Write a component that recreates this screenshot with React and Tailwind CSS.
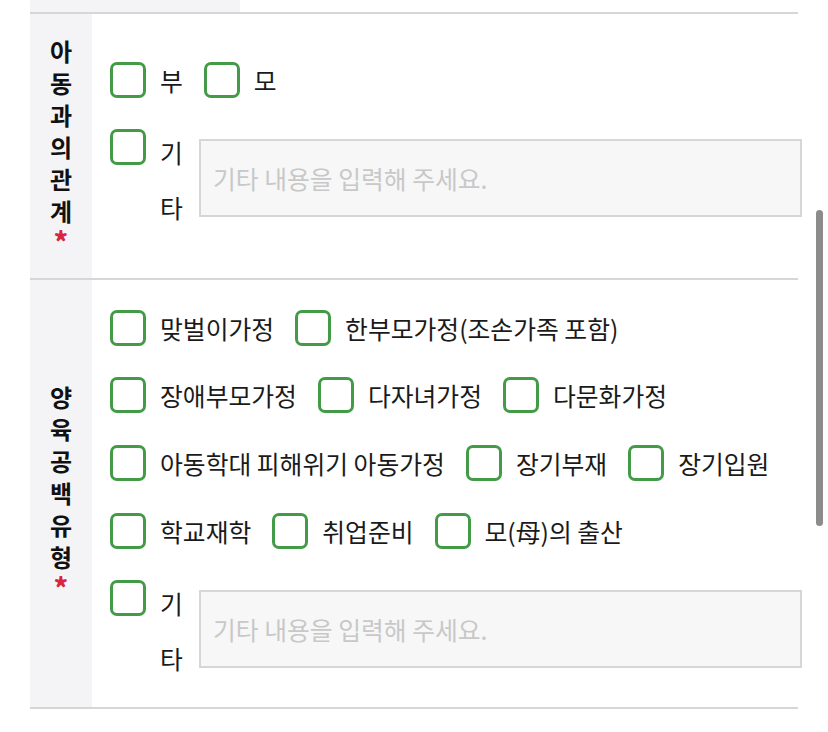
import React from 'react';

const font = { fontFamily: '"Noto Sans CJK KR", "Noto Sans", sans-serif' };

function Box() {
  return <span className="block w-[36px] h-[36px] shrink-0 rounded-[7px] border-[3px] border-[#439a47] bg-white" />;
}

function Option({ label }) {
  return (
    <label className="flex items-center">
      <Box />
      <span className="ml-[14px] text-[24.8px] leading-[36px] text-[#1a1a1a] whitespace-nowrap">{label}</span>
    </label>
  );
}

function Line({ items, className = '' }) {
  return (
    <div className={`flex items-center gap-x-[21px] ${className}`}>
      {items.map((t) => (
        <Option key={t} label={t} />
      ))}
    </div>
  );
}

function EtcLine({ className = '' }) {
  return (
    <div className={`flex items-start ${className}`}>
      <span className="mt-[4px]">
        <Box />
      </span>
      <span className="ml-[14px] w-[25px] break-all text-[24.8px] leading-[55px] text-[#1a1a1a]">기타</span>
      <input
        type="text"
        placeholder="기타 내용을 입력해 주세요."
        className="ml-[14px] mt-[14px] -mr-[4px] h-[78px] flex-1 min-w-0 border-2 border-[#d6d6d6] bg-[#f7f7f7] px-[12px] text-[24.8px] text-[#1a1a1a] outline-none placeholder:text-[#c8c8c8]"
        style={font}
      />
    </div>
  );
}

function Label({ text }) {
  return (
    <>
      <div className="w-[26px] break-all text-center text-[24px] font-bold leading-[32px] text-[#111]">{text}</div>
      <div className="text-[27px] font-black leading-[27px] text-[#d7263d]">*</div>
    </>
  );
}

export default function App() {
  return (
    <div className="relative h-[732px] w-[828px] overflow-hidden bg-white" style={font}>
      <div className="px-[30px]">
        <div className="h-[12px] w-[210px] bg-[#f4f4f6]" />
        <div className="border-t-2 border-[#d6d6d6]" />

        {/* 아동과의 관계 */}
        <div className="flex border-b-2 border-[#d6d6d6]">
          <div className="flex w-[62px] shrink-0 flex-col items-center bg-[#f4f4f6] pt-[21px] pb-[24px]">
            <Label text="아동과의관계" />
          </div>
          <div className="flex-1 pl-[18px] pt-[48px]">
            <Line items={['부', '모']} />
            <EtcLine className="mt-[27px]" />
          </div>
        </div>

        {/* 양육공백유형 */}
        <div className="flex border-b-2 border-[#d6d6d6]">
          <div className="flex w-[62px] shrink-0 flex-col items-center justify-center bg-[#f4f4f6] pb-[6px]">
            <Label text="양육공백유형" />
          </div>
          <div className="flex-1 pl-[18px] pt-[30px] pb-[21px]">
            <Line items={['맞벌이가정', '한부모가정(조손가족 포함)']} />
            <Line className="mt-[31px]" items={['장애부모가정', '다자녀가정', '다문화가정']} />
            <Line className="mt-[32px]" items={['아동학대 피해위기 아동가정', '장기부재', '장기입원']} />
            <Line className="mt-[32px]" items={['학교재학', '취업준비', '모(母)의 출산']} />
            <EtcLine className="mt-[27px]" />
          </div>
        </div>
      </div>

      <div className="absolute left-[816px] top-[210px] h-[316px] w-[7px] rounded-full bg-[#8c8c8c]" />
    </div>
  );
}
